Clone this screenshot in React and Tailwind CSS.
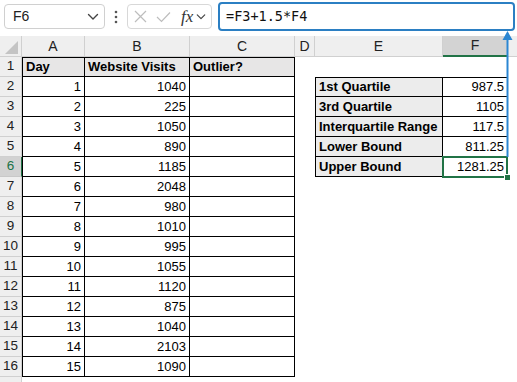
import React from "react";

const visits = [1040, 225, 1050, 890, 1185, 2048, 980, 1010, 995, 1055, 1120, 875, 1040, 2103, 1090];
const stats = [
  ["1st Quartile", "987.5"],
  ["3rd Quartile", "1105"],
  ["Interquartile Range", "117.5"],
  ["Lower Bound", "811.25"],
  ["Upper Bound", "1281.25"],
];

function Chevron({ className }) {
  return (
    <svg className={className} width="12" height="8" viewBox="0 0 12 8" fill="none">
      <path d="M1.5 1.5 L6 6 L10.5 1.5" stroke="#444" strokeWidth="1.4" strokeLinecap="round" strokeLinejoin="round" />
    </svg>
  );
}

function RowHeader({ n, active }) {
  return (
    <div
      className={
        "w-[22px] h-[20px] shrink-0 flex items-center justify-center text-[13.5px] border-r border-b " +
        (active
          ? "bg-[#d2d2d2] text-[#217346] border-r-[#217346] border-b-[#c8c8c8]"
          : "bg-[#efefef] text-[#222] border-[#d0d0d0]")
      }
    >
      {n}
    </div>
  );
}

export default function App() {
  return (
    <div className="relative w-[517px] h-[382px] overflow-hidden bg-white font-['Liberation_Sans',sans-serif] text-black">
      {/* Formula bar */}
      <div className="h-[33px] flex items-center">
        <div className="ml-[4px] w-[101px] h-[25px] rounded-[4px] border border-[#d0d0d0] bg-white flex items-center justify-between pl-[8px] pr-[5px]">
          <span className="text-[14px] text-[#222]">F6</span>
          <Chevron />
        </div>
        <div className="w-[22px] flex items-center justify-center">
          <svg width="4" height="14" viewBox="0 0 4 14">
            <circle cx="2" cy="2" r="1.3" fill="#555" />
            <circle cx="2" cy="7" r="1.3" fill="#555" />
            <circle cx="2" cy="12" r="1.3" fill="#555" />
          </svg>
        </div>
        <div className="w-[85px] h-[25px] rounded-[4px] border border-[#d8d8d8] bg-white flex items-center pl-[6px]">
          <svg width="13" height="13" viewBox="0 0 13 13">
            <path d="M1 1 L12 12 M12 1 L1 12" stroke="#bdbdbd" strokeWidth="1.2" />
          </svg>
          <svg className="ml-[9px]" width="15" height="12" viewBox="0 0 15 12">
            <path d="M1 6 L5.5 10.5 L14 1.5" stroke="#bdbdbd" strokeWidth="1.2" fill="none" />
          </svg>
          <span className="ml-[10px] font-['Liberation_Serif',serif] italic text-[17px] leading-none text-[#333]">fx</span>
          <Chevron className="ml-[3px] w-[10px]" />
        </div>
        <div className="ml-[6px] w-[297px] h-[29px] rounded-[4px] border-2 border-[#2b7fc3] bg-white flex items-center pl-[6px]">
          <span className="font-['DejaVu_Sans_Mono',monospace] text-[13.5px] text-[#111]">=F3+1.5*F4</span>
        </div>
      </div>
      <div className="h-[3px]" />

      {/* Column headers */}
      <div className="flex h-[21px] text-[14px] text-[#222]">
        <div className="w-[22px] shrink-0 bg-[#efefef] border-r border-b border-[#d0d0d0] flex items-end justify-end pr-[3px] pb-[2px]">
          <svg width="13" height="13" viewBox="0 0 13 13">
            <polygon points="13,0 13,13 0,13" fill="#c4c4c4" />
          </svg>
        </div>
        <div className="w-[63px] shrink-0 bg-[#efefef] border-r border-b border-[#d0d0d0] flex items-center justify-center">A</div>
        <div className="w-[105px] shrink-0 bg-[#efefef] border-r border-b border-[#d0d0d0] flex items-center justify-center">B</div>
        <div className="w-[105px] shrink-0 bg-[#efefef] border-r border-b border-[#d0d0d0] flex items-center justify-center">C</div>
        <div className="w-[20px] shrink-0 bg-[#efefef] border-r border-b border-[#d0d0d0] flex items-center justify-center">D</div>
        <div className="w-[128px] shrink-0 bg-[#efefef] border-r border-b border-[#d0d0d0] flex items-center justify-center">E</div>
        <div className="w-[65px] shrink-0 bg-[#d3d3d3] border-r border-[#d0d0d0] border-b-2 border-b-[#217346] flex items-center justify-center">F</div>
        <div className="flex-1 bg-[#efefef] border-b border-[#d0d0d0]" />
      </div>

      {/* Row 1 */}
      <div className="flex h-[20px] text-[13px]">
        <RowHeader n={1} />
        <div className="w-[63px] shrink-0 bg-[#e7e6e6] border border-black font-bold flex items-center pl-[3px]">Day</div>
        <div className="w-[105px] shrink-0 bg-[#e7e6e6] border-t border-b border-r border-black font-bold flex items-center pl-[3px]">Website Visits</div>
        <div className="w-[105px] shrink-0 bg-[#e7e6e6] border-t border-b border-r border-black font-bold flex items-center pl-[3px]">Outlier?</div>
      </div>

      {/* Rows 2-16 */}
      {visits.map((v, i) => {
        const r = i + 2;
        const s = stats[i];
        return (
          <div key={r} className="flex h-[20px] text-[13px]">
            <RowHeader n={r} active={r === 6} />
            <div className="w-[63px] shrink-0 border-l border-r border-b border-black flex items-center justify-end pr-[3px]">{i + 1}</div>
            <div className="w-[105px] shrink-0 border-r border-b border-black flex items-center justify-end pr-[3px]">{v}</div>
            <div className="w-[105px] shrink-0 border-r border-b border-black" />
            <div className="w-[20px] shrink-0" />
            {s && (
              <>
                <div
                  className={
                    "w-[128px] shrink-0 bg-[#ececec] border-l border-r border-b border-black font-bold flex items-center pl-[3px] " +
                    (i === 0 ? "border-t" : "")
                  }
                >
                  {s[0]}
                </div>
                <div
                  className={
                    "w-[65px] shrink-0 bg-white border-r border-b border-black flex items-center justify-end pr-[3px] " +
                    (i === 0 ? "border-t" : "")
                  }
                >
                  {s[1]}
                </div>
              </>
            )}
          </div>
        );
      })}

      {/* Row 17 partial */}
      <div className="flex h-[20px]">
        <div className="w-[22px] h-[20px] shrink-0 bg-[#efefef] border-r border-[#d0d0d0]" />
      </div>

      {/* Selection on F6 */}
      <div className="absolute left-[442px] top-[156px] w-[66px] h-[22px] border-2 border-[#217346]" />
      <div className="absolute left-[504px] top-[174px] w-[7px] h-[7px] bg-[#217346] border border-white" />

      {/* Blue arrow */}
      <svg className="absolute left-[502px] top-[31px]" width="11" height="127" viewBox="0 0 11 127">
        <line x1="5.5" y1="6" x2="5.5" y2="126" stroke="#2b86d2" strokeWidth="2" />
        <polygon points="0.5,9 5.5,0 10.5,9" fill="#2b86d2" />
      </svg>
    </div>
  );
}
